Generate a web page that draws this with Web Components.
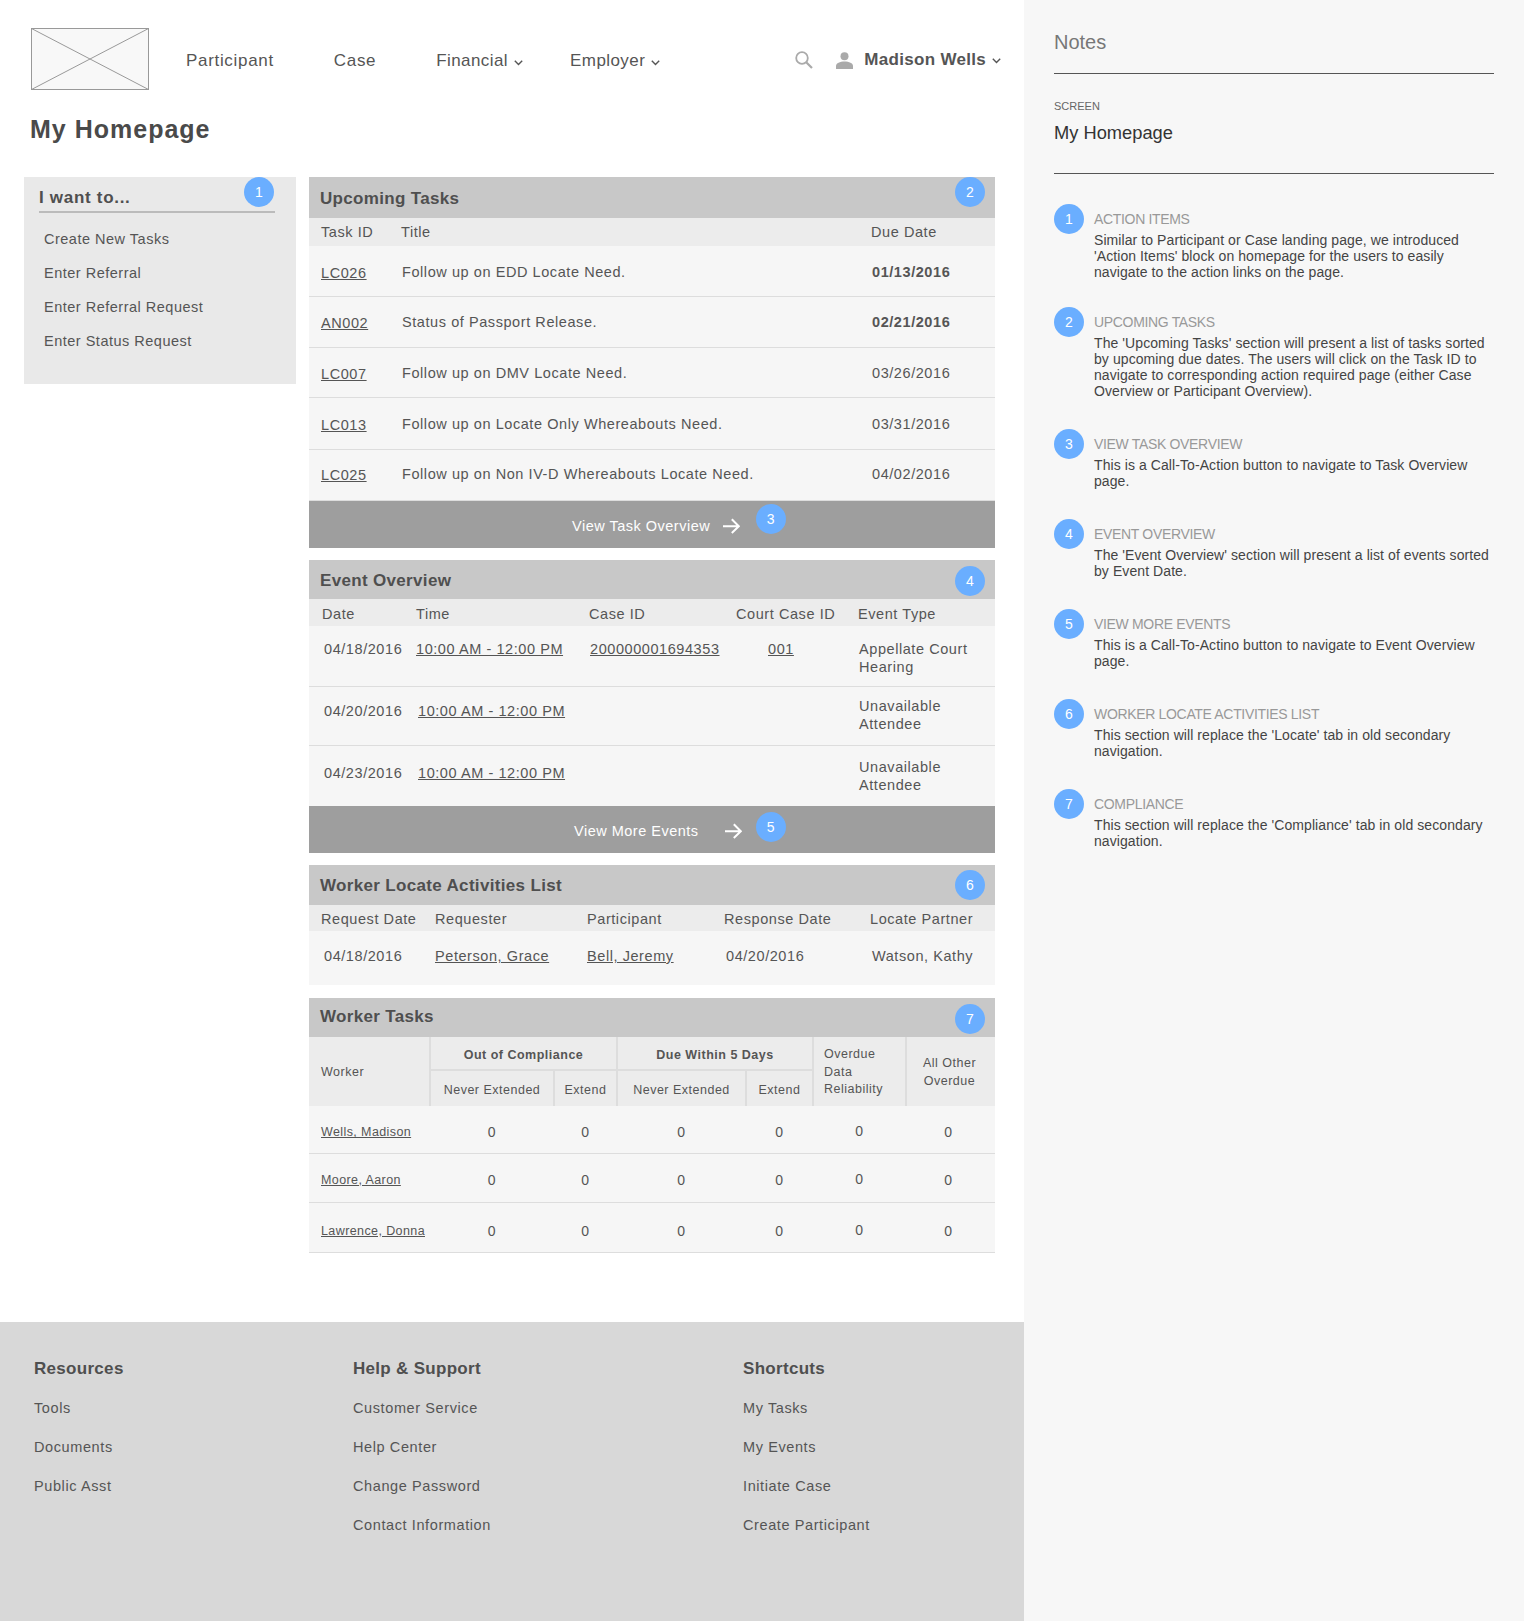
<!DOCTYPE html>
<html>
<head>
<meta charset="utf-8">
<title>My Homepage</title>
<style>
    html, body { margin: 0; padding: 0; background: #fff; }
    body { font-family: "Liberation Sans", Arial, sans-serif; color: #555; }
</style>
</head>
<body>
<app-shell>
    <site-header></site-header>
    <div slot="side"><want-to></want-to></div>
    <upcoming-tasks slot="panels"></upcoming-tasks>
    <event-overview slot="panels"></event-overview>
    <worker-locate slot="panels"></worker-locate>
    <worker-tasks slot="panels"></worker-tasks>
    <site-footer slot="footer"></site-footer>
    <notes-panel slot="notes"></notes-panel>
</app-shell>

<script>
// Shared bits
const chevron = `<svg width="9" height="6" viewBox="0 0 9 6" fill="none" stroke="#555" stroke-width="1.4"><path d="M.8.8 4.5 4.5 8.2.8"/></svg>`;
const arrow = `<svg width="17" height="16" viewBox="0 0 17 16" fill="none" stroke="#fff" stroke-width="2"><path d="M0 8.2h15.5M8.8 1.2 15.8 8.2 8.8 15"/></svg>`;

const tableCss = `
    :host { display: block; }
    table { width: 100%; border-collapse: collapse; table-layout: fixed; font-size: 14.5px; letter-spacing: .57px; color: #555; }
    th { background: #ececec; font-weight: normal; text-align: left; padding: 0; }
    td { background: #f6f6f6; padding: 0; border-bottom: 1px solid #ddd; }
    a { color: #555; text-decoration: underline; }
    b { font-weight: bold; }
`;

class NumBadge extends HTMLElement {
    constructor() {
        super();
        this.attachShadow({ mode: 'open' }).innerHTML = `
            <style>
                :host {
                    display: flex;
                    width: 30px;
                    height: 30px;
                    flex: none;
                    border-radius: 50%;
                    background: #6aaeff;
                    color: #fff;
                    font-size: 14px;
                    align-items: center;
                    justify-content: center;
                    font-family: "Liberation Sans", Arial, sans-serif;
                }
            </style>
            <slot></slot>
        `;
    }
}
customElements.define('num-badge', NumBadge);

class AppShell extends HTMLElement {
    constructor() {
        super();
        this.attachShadow({ mode: 'open' }).innerHTML = `
            <style>
                :host { display: flex; width: 1524px; height: 1621px; overflow: hidden; }
                .main { width: 1024px; flex: none; display: flex; flex-direction: column; }
                .content { display: flex; gap: 13px; padding: 0 29px 0 24px; }
                .side { width: 272px; flex: none; }
                .panels { width: 686px; flex: none; display: flex; flex-direction: column; gap: 12px; }
                .foot { margin-top: auto; }
                .notes { flex: 1; }
            </style>
            <div class="main">
                <slot></slot>
                <div class="content">
                    <div class="side"><slot name="side"></slot></div>
                    <div class="panels"><slot name="panels"></slot></div>
                </div>
                <div class="foot"><slot name="footer"></slot></div>
            </div>
            <div class="notes"><slot name="notes"></slot></div>
        `;
    }
}
customElements.define('app-shell', AppShell);

class SiteHeader extends HTMLElement {
    constructor() {
        super();
        this.attachShadow({ mode: 'open' }).innerHTML = `
            <style>
                :host { display: block; height: 177px; font-size: 17px; letter-spacing: .68px; color: #555; }
                .top { display: flex; align-items: center; padding: 28px 23px 0 31px; }
                .logo { width: 118px; height: 62px; flex: none; display: block; }
                nav { display: flex; gap: 60px; margin-left: 37px; padding-top: 4px; }
                nav span { display: flex; align-items: center; }
                .dd { margin-right: -13px; letter-spacing: .42px; }
                .dd svg { margin-left: 6px; margin-top: 3px; }
                .right { margin-left: auto; display: flex; align-items: center; padding-top: 2px; }
                .user { font-weight: bold; margin-left: 11px; letter-spacing: .3px; }
                .person { margin-left: 23px; }
                .right > svg:last-child { margin-left: 6px; margin-top: 1px; }
                h1 { margin: 24px 0 0 30px; font-size: 25px; line-height: 30px; letter-spacing: 1px; font-weight: bold; color: #4a4a4a; }
            </style>
            <div class="top">
                <svg class="logo" viewBox="0 0 118 62" fill="#f8f8f8" stroke="#999" stroke-width="1">
                    <rect x=".5" y=".5" width="117" height="61"/>
                    <path d="M.5.5 117.5 61.5M117.5.5.5 61.5" fill="none"/>
                </svg>
                <nav>
                    <span>Participant</span>
                    <span>Case</span>
                    <span class="dd">Financial ${chevron}</span>
                    <span class="dd">Employer ${chevron}</span>
                </nav>
                <div class="right">
                    <svg width="18" height="18" viewBox="0 0 18 18" fill="none" stroke="#aaa" stroke-width="1.8"><circle cx="7" cy="7" r="5.8"/><path d="M11.2 11.2 17 17" stroke-width="2.2"/></svg>
                    <svg class="person" width="17" height="17" viewBox="0 0 17 17" fill="#aaa"><circle cx="8.5" cy="4.2" r="4"/><path d="M0 17v-3c0-3 4-4.6 8.5-4.6S17 11 17 14v3z"/></svg>
                    <span class="user">Madison Wells</span>
                    ${chevron}
                </div>
            </div>
            <h1>My Homepage</h1>
        `;
    }
}
customElements.define('site-header', SiteHeader);

class WantTo extends HTMLElement {
    constructor() {
        super();
        const items = ['Create New Tasks', 'Enter Referral', 'Enter Referral Request', 'Enter Status Request'];
        this.attachShadow({ mode: 'open' }).innerHTML = `
            <style>
                :host { display: block; position: relative; height: 207px; background: #e9e9e9; box-sizing: border-box; padding: 0 21px 0 14.5px; color: #555; }
                h2 { margin: 0; padding: 9px 0 0 .5px; height: 25px; font-size: 17px; line-height: 24px; letter-spacing: .7px; border-bottom: 2px solid #bbb; color: #4f4f4f; }
                ul { list-style: none; margin: 9px 0 0; padding: 0 0 0 5.5px; font-size: 14.5px; letter-spacing: .5px; }
                li { height: 34px; line-height: 34px; }
                num-badge { position: absolute; top: 0; left: 220px; }
            </style>
            <h2>I want to...</h2>
            <num-badge>1</num-badge>
            <ul>${items.map(i => `<li>${i}</li>`).join('')}</ul>
        `;
    }
}
customElements.define('want-to', WantTo);

class PanelCard extends HTMLElement {
    constructor() {
        super();
        this.attachShadow({ mode: 'open' });
    }
    connectedCallback() {
        const h = Number(this.getAttribute('head') || 39);
        const line = this.getAttribute('line') || h + 1;
        const top = this.getAttribute('badge-top') || 6;
        this.shadowRoot.innerHTML = `
            <style>
                :host { display: block; position: relative; }
                header { height: ${h}px; line-height: ${line}px; background: #c8c8c8; padding-left: 11px; font-size: 17px; font-weight: bold; letter-spacing: .33px; color: #4f4f4f; }
                num-badge { position: absolute; top: ${top}px; right: 10px; }
            </style>
            <header>${this.getAttribute('title-text')}</header>
            <num-badge>${this.getAttribute('num')}</num-badge>
            <slot></slot>
        `;
    }
}
customElements.define('panel-card', PanelCard);

class CallButton extends HTMLElement {
    constructor() {
        super();
        this.attachShadow({ mode: 'open' });
    }
    connectedCallback() {
        this.shadowRoot.innerHTML = `
            <style>
                :host { display: flex; position: relative; align-items: center; height: 47px; background: #9e9e9e; color: #fff; font-size: 14.5px; letter-spacing: .5px; padding-left: ${this.getAttribute('left')}px; }
                svg { position: absolute; left: ${this.getAttribute('arrow')}px; top: 17px; }
                num-badge { position: absolute; left: 447px; top: ${this.getAttribute('badge-top')}px; }
                span { padding-top: 3px; }
            </style>
            <span><slot></slot></span>
            ${arrow}
            <num-badge>${this.getAttribute('num')}</num-badge>
        `;
    }
}
customElements.define('call-button', CallButton);

class UpcomingTasks extends HTMLElement {
    constructor() {
        super();
        const rows = [
            ['LC026', 'Follow up on EDD Locate Need.', '01/13/2016', true, 50, 'padding-top:2px'],
            ['AN002', 'Status of Passport Release.', '02/21/2016', true, 51, 'padding-top:1px'],
            ['LC007', 'Follow up on DMV Locate Need.', '03/26/2016', false, 50, 'padding-top:1px'],
            ['LC013', 'Follow up on Locate Only Whereabouts Need.', '03/31/2016', false, 52, 'padding-top:1px'],
            ['LC025', 'Follow up on Non IV-D Whereabouts Locate Need.', '04/02/2016', false, 51, 'padding-bottom:2px']
        ];
        this.attachShadow({ mode: 'open' }).innerHTML = `
            <style>
                ${tableCss}
                th { height: 28px; }
                .c1 { padding-left: 12px; }
                th.c2, th.c3 { padding-left: 2px; }
                td.c2, td.c3 { padding-left: 3px; }
                td a { position: relative; top: 1px; }
            </style>
            <panel-card title-text="Upcoming Tasks" num="2" head="41" line="44" badge-top="0">
                <table>
                    <colgroup><col style="width:90px"><col style="width:470px"><col></colgroup>
                    <tr><th class="c1">Task ID</th><th class="c2">Title</th><th class="c3">Due Date</th></tr>
                    ${rows.map(r => `<tr style="height:${r[4]}px">
                        <td class="c1" style="${r[5]}"><a>${r[0]}</a></td>
                        <td class="c2" style="${r[5]}">${r[1]}</td>
                        <td class="c3" style="${r[5]}">${r[3] ? `<b>${r[2]}</b>` : r[2]}</td>
                    </tr>`).join('')}
                </table>
                <call-button num="3" left="263" arrow="414" badge-top="3">View Task Overview</call-button>
            </panel-card>
        `;
    }
}
customElements.define('upcoming-tasks', UpcomingTasks);

class EventOverview extends HTMLElement {
    constructor() {
        super();
        const t = '10:00 AM - 12:00 PM';
        this.attachShadow({ mode: 'open' }).innerHTML = `
            <style>
                ${tableCss}
                th { height: 27px; padding-top: 3px; box-sizing: border-box; }
                td { vertical-align: top; padding-top: 14px; line-height: 18px; box-sizing: border-box; }
                th.c1 { padding-left: 13px; } td.c1 { padding-left: 15px; }
                th.c2, td.c2 { padding-left: 2px; }
                th.c3 { padding-left: 2px; } td.c3 { padding-left: 3px; }
                th.c4 { padding-left: 2px; } td.c4 { padding-left: 34px; }
                th.c5 { padding-left: 4px; } td.c5 { padding-left: 5px; padding-right: 10px; }
                .nudge { margin-left: 2px; }
                tr.r2 td { padding-top: 15px; } tr.r2 td.c5 { padding-top: 10px; }
                tr.r3 td { padding-top: 18px; border: 0; } tr.r3 td.c5 { padding-top: 12px; }
            </style>
            <panel-card title-text="Event Overview" num="4" head="39" line="41" badge-top="6">
                <table>
                    <colgroup><col style="width:105px"><col style="width:173px"><col style="width:147px"><col style="width:120px"><col></colgroup>
                    <tr><th class="c1">Date</th><th class="c2">Time</th><th class="c3">Case ID</th><th class="c4">Court Case ID</th><th class="c5">Event Type</th></tr>
                    <tr style="height:61px">
                        <td class="c1">04/18/2016</td>
                        <td class="c2"><a>${t}</a></td>
                        <td class="c3"><a>200000001694353</a></td>
                        <td class="c4"><a>001</a></td>
                        <td class="c5">Appellate Court Hearing</td>
                    </tr>
                    <tr class="r2" style="height:59px">
                        <td class="c1">04/20/2016</td>
                        <td class="c2"><a class="nudge">${t}</a></td>
                        <td class="c3"></td><td class="c4"></td>
                        <td class="c5">Unavailable Attendee</td>
                    </tr>
                    <tr class="r3" style="height:60px">
                        <td class="c1">04/23/2016</td>
                        <td class="c2"><a class="nudge">${t}</a></td>
                        <td class="c3"></td><td class="c4"></td>
                        <td class="c5">Unavailable Attendee</td>
                    </tr>
                </table>
                <call-button num="5" left="265" arrow="416" badge-top="6">View More Events</call-button>
            </panel-card>
        `;
    }
}
customElements.define('event-overview', EventOverview);

class WorkerLocate extends HTMLElement {
    constructor() {
        super();
        this.attachShadow({ mode: 'open' }).innerHTML = `
            <style>
                ${tableCss}
                th { height: 26px; padding-left: 2px; padding-top: 2px; box-sizing: border-box; }
                td { padding-left: 2px; padding-bottom: 3px; border: 0; }
                th:first-child { padding-left: 12px; } td:first-child { padding-left: 15px; }
                td.p4 { padding-left: 4px; }
            </style>
            <panel-card title-text="Worker Locate Activities List" num="6" head="40" badge-top="5">
                <table>
                    <colgroup><col style="width:124px"><col style="width:152px"><col style="width:137px"><col style="width:146px"><col></colgroup>
                    <tr><th>Request Date</th><th>Requester</th><th>Participant</th><th>Response Date</th><th>Locate Partner</th></tr>
                    <tr style="height:54px">
                        <td>04/18/2016</td><td><a>Peterson, Grace</a></td><td><a>Bell, Jeremy</a></td>
                        <td class="p4">04/20/2016</td><td class="p4">Watson, Kathy</td>
                    </tr>
                </table>
            </panel-card>
        `;
    }
}
customElements.define('worker-locate', WorkerLocate);

class WorkerTasks extends HTMLElement {
    constructor() {
        super();
        const rows = [['Wells, Madison', 48, 6], ['Moore, Aaron', 49, 3], ['Lawrence, Donna', 50, 6]];
        this.attachShadow({ mode: 'open' }).innerHTML = `
            <style>
                ${tableCss}
                :host { margin-top: 1px; }
                table { font-size: 12.5px; letter-spacing: .5px; }
                th { border-left: 2px solid #ddd; text-align: center; height: 34px; line-height: 17.5px; box-sizing: border-box; }
                th.w { border-left: 0; text-align: left; padding: 3px 0 0 12px; }
                th.g { border-bottom: 2px solid #ddd; font-weight: bold; height: 33px; padding-top: 6px; }
                th.l { text-align: left; padding-left: 10px; padding-top: 3px; }
                th.o { padding: 2px 3px 0 0; line-height: 18px; }
                th.n { padding-top: 6px; height: 36px; }
                td { text-align: center; font-size: 14px; }
                td:first-child { text-align: left; padding-left: 12px; font-size: 12.5px; letter-spacing: .4px; }
                td.up { padding-bottom: 2px; }
                td:last-child { padding-right: 4px; }
            </style>
            <panel-card title-text="Worker Tasks" num="7" head="39" line="37" badge-top="6">
                <table>
                    <colgroup><col style="width:121px"><col style="width:124px"><col style="width:63px"><col style="width:129px"><col style="width:67px"><col style="width:93px"><col></colgroup>
                    <tr>
                        <th class="w" rowspan="2">Worker</th>
                        <th class="g" colspan="2">Out of Compliance</th>
                        <th class="g" colspan="2">Due Within 5 Days</th>
                        <th class="l" rowspan="2">Overdue Data Reliability</th>
                        <th class="o" rowspan="2">All Other<br>Overdue</th>
                    </tr>
                    <tr><th class="n">Never Extended</th><th class="n">Extend</th><th class="n">Never Extended</th><th class="n">Extend</th></tr>
                    ${rows.map(r => `<tr style="height:${r[1]}px">
                        <td style="padding-top:${r[2]}px"><a>${r[0]}</a></td>
                        ${[0, 1, 2, 3, 4, 5].map(i => `<td class="${i === 4 ? 'up' : ''}" style="padding-top:${r[2]}px">0</td>`).join('')}
                    </tr>`).join('')}
                </table>
            </panel-card>
        `;
    }
}
customElements.define('worker-tasks', WorkerTasks);

class SiteFooter extends HTMLElement {
    constructor() {
        super();
        const cols = [
            ['Resources', 319, ['Tools', 'Documents', 'Public Asst']],
            ['Help & Support', 390, ['Customer Service', 'Help Center', 'Change Password', 'Contact Information']],
            ['Shortcuts', 281, ['My Tasks', 'My Events', 'Initiate Case', 'Create Participant']]
        ];
        this.attachShadow({ mode: 'open' }).innerHTML = `
            <style>
                :host { display: flex; height: 299px; box-sizing: border-box; background: #d8d8d8; padding: 36px 0 0 34px; color: #555; }
                h3 { margin: 0 0 9px; font-size: 17px; line-height: 22px; letter-spacing: .3px; color: #4f4f4f; }
                ul { list-style: none; margin: 0; padding: 0; font-size: 14.5px; letter-spacing: .6px; }
                li { height: 39px; line-height: 39px; }
            </style>
            ${cols.map(c => `<section style="width:${c[1]}px">
                <h3>${c[0].replace('&', '&amp;')}</h3>
                <ul>${c[2].map(l => `<li>${l}</li>`).join('')}</ul>
            </section>`).join('')}
        `;
    }
}
customElements.define('site-footer', SiteFooter);

class NoteItem extends HTMLElement {
    constructor() {
        super();
        this.attachShadow({ mode: 'open' });
    }
    connectedCallback() {
        this.shadowRoot.innerHTML = `
            <style>
                :host { display: flex; gap: 10px; margin-bottom: var(--after, 30px); }
                h4 { margin: 6px 0 0; font-size: 14px; line-height: 18px; font-weight: normal; color: #999; text-transform: uppercase; letter-spacing: -.33px; }
                p { margin: 4px 0 0; font-size: 14px; line-height: 16px; color: #444; letter-spacing: .08px; }
            </style>
            <num-badge>${this.getAttribute('num')}</num-badge>
            <div>
                <h4>${this.getAttribute('heading')}</h4>
                <p><slot></slot></p>
            </div>
        `;
    }
}
customElements.define('note-item', NoteItem);

class NotesPanel extends HTMLElement {
    constructor() {
        super();
        this.attachShadow({ mode: 'open' }).innerHTML = `
            <style>
                :host { display: block; height: 100%; box-sizing: border-box; background: #f7f7f7; padding: 0 30px; }
                .title { height: 74px; box-sizing: border-box; padding-top: 30px; font-size: 20px; line-height: 24px; color: #777; border-bottom: 1px solid #555; }
                .label { margin-top: 25px; font-size: 11px; line-height: 14px; color: #666; }
                .screen { margin-top: 8px; height: 49px; font-size: 18.3px; line-height: 24px; color: #333; }
                .rule { border-bottom: 1px solid #555; margin-bottom: 30px; height: 0; margin-top: 3px; }
            </style>
            <div class="title">Notes</div>
            <div class="label">SCREEN</div>
            <div class="screen">My Homepage</div>
            <div class="rule"></div>
            <note-item num="1" heading="Action Items" style="--after:27px">Similar to Participant or Case landing page, we introduced 'Action Items' block on homepage for the users to easily navigate to the action links on the page.</note-item>
            <note-item num="2" heading="Upcoming Tasks">The 'Upcoming Tasks' section will present a list of tasks sorted by upcoming due dates. The users will click on the Task ID to navigate to corresponding action required page (either Case Overview or Participant Overview).</note-item>
            <note-item num="3" heading="View Task Overview">This is a Call-To-Action button to navigate to Task Overview page.</note-item>
            <note-item num="4" heading="Event Overview">The 'Event Overview' section will present a list of events sorted by Event Date.</note-item>
            <note-item num="5" heading="View More Events">This is a Call-To-Actino button to navigate to Event Overview page.</note-item>
            <note-item num="6" heading="Worker Locate Activities List">This section will replace the 'Locate' tab in old secondary navigation.</note-item>
            <note-item num="7" heading="Compliance">This section will replace the 'Compliance' tab in old secondary navigation.</note-item>
        `;
    }
}
customElements.define('notes-panel', NotesPanel);
</script>
</body>
</html>
